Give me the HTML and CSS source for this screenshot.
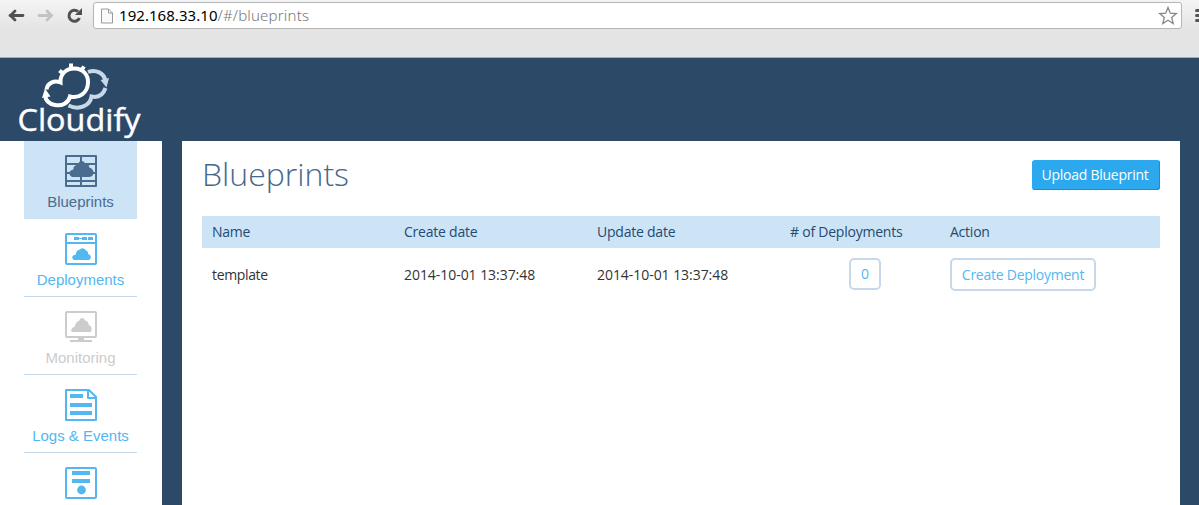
FILE: index.html
```html
<!DOCTYPE html>
<html lang="en">
<head>
<meta charset="utf-8">
<title>Blueprints</title>
<link rel="stylesheet" href="styles.css">
</head>
<body>
<div class="browser">
  <div class="toolbar">
    <svg class="nav" width="86" height="30" viewBox="0 0 86 30" fill="none">
      <path d="M10 15.500H23M15 11L10.500 15.500L15 20" stroke="#505050" stroke-width="2.800" stroke-linecap="round"/>
      <path d="M39 15.500H51M47 11L51.500 15.500L47 20" stroke="#c3c3c3" stroke-width="2.800" stroke-linecap="round"/>
      <path d="M78 11.500A5.500 5.500 0 1 0 79.500 18" stroke="#505050" stroke-width="3"/>
      <path d="M82 8V15H75Z" fill="#505050"/>
    </svg>
    <div class="address">
      <svg class="page" width="12" height="16" viewBox="0 0 12 16"><path d="M.500 1H7.500L11.500 5V15H.500Z M7.500 1V5H11.500" fill="#fafafa" stroke="#999"/></svg>
      <span class="url"><b>192.168.33.10</b>/#/blueprints</span>
      <svg class="star" width="20" height="20" viewBox="0 0 20 20"><path d="M10 1.500L12.300 7.200L18.300 7.600L13.700 11.500L15.200 17.500L10 14.200L4.800 17.500L6.300 11.500L1.700 7.600L7.700 7.200Z" fill="#fff" stroke="#888" stroke-width="1.300"/></svg>
    </div>
    <svg class="menu" width="4" height="16" viewBox="0 0 4 16"><path d="M4 2.500H1.500M4 7.500H1.500M4 12.500H1.500" stroke="#555" stroke-width="3" stroke-linecap="round"/></svg>
  </div>
</div>
<header class="header">
  <svg class="logo" width="160" height="83" viewBox="0 58 160 83" fill="none">
    <g stroke="#c6d8ea" stroke-width="4">
      <path d="M88 72C96 69 104 73 105.500 81"/>
      <path d="M105.500 88C103 95 98 98 91.500 96.500C90 106 79 110.500 68.500 105.500"/>
    </g>
    <path d="M100.500 80L109 78L106.500 87.500Z" fill="#c6d8ea"/>
    <g stroke="#fff" stroke-width="4">
      <path d="M46.500 89.500C47.500 83 54 80 60.500 82.500C60 74 66 68.500 74.500 68.500C83 68.500 88.500 75 88 83C87.500 93 79 99 70 96.500C68.500 103 62 106.500 55 105C49 104 45.500 100 45 95"/>
      <path d="M71 69V63.500M81 71L84 66.500M64 74.500L59.500 70.500"/>
    </g>
    <path d="M42 98L45 88.500L50.500 96.500Z" fill="#fff"/>
    <text class="brand" x="17.500" y="130.500" textLength="123" lengthAdjust="spacingAndGlyphs">Cloudify</text>
  </svg>
</header>
<div class="body">
  <nav class="sidebar">
    <a class="item active">
      <svg width="32" height="32" viewBox="0 0 32 32"><path d="M1 1H31V31H1ZM1 9H31M1 18H31M1 26H31M16 1V31" fill="none" stroke="currentColor" stroke-width="2" stroke-linejoin="round"/><path d="M7 22C3 20 4 15 8.500 14.500C8 11 11 10 13 9.500C14 5 19 5 20 8.500C23 8.500 25 11 24 12.500C27 13 29 16 28.500 18C28 21 26 22 24 22Z" fill="currentColor"/></svg>
      <span>Blueprints</span>
    </a>
    <a class="item">
      <svg width="32" height="32" viewBox="0 0 32 32"><rect x="1" y="1" width="30" height="30" rx="1" fill="none" stroke="currentColor" stroke-width="2"/><path d="M1 10H31" stroke="currentColor" stroke-width="2"/><path d="M9 5.500H14M17 5.500H22M23 5.500H28" stroke="currentColor" stroke-width="3"/><path d="M14 5.500H17" stroke="currentColor"/><path d="M9 27C6 25 7 22 11 21.500C11 18 13 17 15 16.500C17 14 20 16 21 17.500C23 18 23 20 23 21C26 22 27 25 24 27Z" fill="currentColor"/></svg>
      <span>Deployments</span>
    </a>
    <a class="item disabled">
      <svg width="32" height="32" viewBox="0 0 32 32"><rect x="1" y="1" width="30" height="25" rx="1" fill="none" stroke="currentColor" stroke-width="2"/><path d="M13 27H19V29H27V31H5V29H13Z" fill="currentColor"/><path d="M7 21C5 20 7 16 10 15.500C10 12 12 10.500 14 10C15 6 19 6 20 9.500C23 10 24 12 23.500 14C27 15 27 18 26 21Z" fill="currentColor"/></svg>
      <span>Monitoring</span>
    </a>
    <a class="item">
      <svg width="32" height="32" viewBox="0 0 32 32"><path d="M1 1H24L31 8V31H1ZM23 1V9H31" fill="none" stroke="currentColor" stroke-width="2" stroke-linejoin="round"/><path d="M5 7H18M5 16H27M5 24H27" stroke="currentColor" stroke-width="4"/></svg>
      <span>Logs &amp; Events</span>
    </a>
    <a class="item last">
      <svg width="32" height="32" viewBox="0 0 32 32"><rect x="1" y="1" width="30" height="30" rx="1" fill="none" stroke="currentColor" stroke-width="2"/><path d="M7 6H25M7 14H25" stroke="currentColor" stroke-width="4"/><circle cx="16.500" cy="23" r="4.400" fill="currentColor"/></svg>
    </a>
  </nav>
  <main class="content">
    <div class="heading"><h1>Blueprints</h1><button class="upload">Upload Blueprint</button></div>
    <div class="row head"><span>Name</span><span>Create date</span><span>Update date</span><span># of Deployments</span><span>Action</span></div>
    <div class="row data"><span class="name">template</span><span>2014-10-01 13:37:48</span><span>2014-10-01 13:37:48</span><span><button class="outline num">0</button></span><span><button class="outline create">Create Deployment</button></span></div>
  </main>
</div>
</body>
</html>
```
FILE: styles.css
```css
* { box-sizing: border-box; }
body { margin: 0; height: 505px; overflow: hidden; background: #2c4a68; font-family: "Open Sans", sans-serif; display: flex; flex-direction: column; }
svg { display: block; flex: none; }
button { font-family: inherit; white-space: nowrap; padding: 0; }
.browser { height: 58px; flex: none; border-bottom: 1px solid #a9a9a9; background: linear-gradient(#f4f4f4, #e4e4e4 30px); }
.toolbar { display: flex; height: 30px; }
.nav { margin-right: 7px; }
.address { width: 1089px; height: 27px; margin-top: 2px; border: 1px solid #b5b5b5; border-radius: 3px; background: #fff; display: flex; align-items: center; padding: 0 3px 0 7px; }
.url { margin: -2px 0 0 6px; font: 15px "Noto Sans", sans-serif; font-weight: 300; color: #777; letter-spacing: .18px; flex: 1; }
.url b { color: #000; font-weight: 400; letter-spacing: .05px; }
.menu { margin: 8px 0 0 13px; }
.header { height: 83px; flex: none; }
.brand { font-family: "Open Sans", sans-serif; font-size: 31px; fill: #fff; stroke: #fff; stroke-width: .4px; }
.body { display: flex; flex: 1; min-height: 0; }
.sidebar { width: 162px; background: #fff; padding: 0 25px 0 24px; }
.item { height: 78px; display: flex; flex-direction: column; align-items: center; padding: 14px 0 0 1px; color: #53b7f1; border-bottom: 1px solid #c6d8ea; }
.item span { font: 15px/18px "Liberation Sans", Arial, sans-serif; margin: 6px 0 0 -1px; white-space: nowrap; }
.last { height: 52px; border: 0; }
.active { background: #cde3f6; color: #4a6c8f; border-color: #cde3f6; }
.disabled { color: #ccc; }
.content { width: 998px; margin-left: 20px; background: #fff; padding: 0 20px; }
.heading { display: flex; justify-content: space-between; height: 75px; }
h1 { margin: 9px 0 0; font-size: 32px; line-height: 48px; font-weight: 300; color: #45688b; }
.upload { width: 128px; height: 30px; margin-top: 19px; padding: 0 2px 2px 0; border: 0; border-radius: 3px; background: #2ba8ee; color: #fff; font-size: 14px; letter-spacing: -.25px; box-shadow: inset -1px -1px #1d8cd4; }
.row { display: grid; grid-template-columns: 192px 193px 193px 160px 220px; align-items: center; font-size: 14px; letter-spacing: -.05px; color: #333; }
.row > span { padding-left: 10px; white-space: nowrap; }
.row .name { letter-spacing: -.35px; }
.head { height: 32px; background: #cde3f6; color: #234b72; letter-spacing: -.23px; padding-bottom: 2px; }
.data { height: 53px; }
.outline { display: block; border: 2px solid #c6d8ea; border-radius: 5px; background: #fff; color: #53b7f1; font-size: 14px; letter-spacing: -.25px; }
.num { width: 32px; height: 32px; margin: -1px 0 0 59px; padding-bottom: 2px; }
.create { width: 146px; height: 33px; }
```
